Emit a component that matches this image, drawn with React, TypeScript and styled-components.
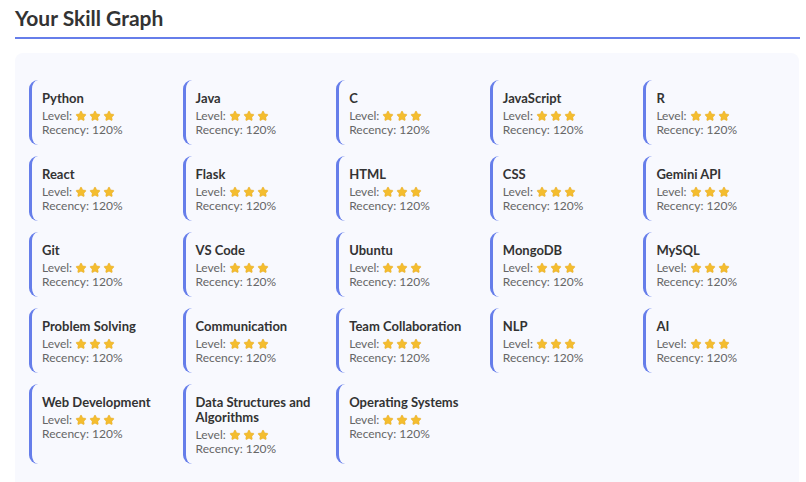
import styled, { createGlobalStyle } from "styled-components";

// skills shown in the graph, all at level 3 for now
const skills = [
  "Python", "Java", "C", "JavaScript", "R",
  "React", "Flask", "HTML", "CSS", "Gemini API",
  "Git", "VS Code", "Ubuntu", "MongoDB", "MySQL",
  "Problem Solving", "Communication", "Team Collaboration", "NLP", "AI",
  "Web Development", "Data Structures and Algorithms", "Operating Systems",
];

function Star() {
  return (
    <StarIcon viewBox="0 0 24 24">
      <path
        d="M12 2.2c.5 0 .9.3 1.1.7l2.4 4.9 5.4.8c.9.1 1.3 1.3.6 1.9l-3.9 3.8.9 5.4c.2.9-.8 1.6-1.6 1.2L12 18.3l-4.9 2.6c-.8.4-1.8-.3-1.6-1.2l.9-5.4-3.9-3.8c-.7-.6-.3-1.8.6-1.9l5.4-.8 2.4-4.9c.2-.4.6-.7 1.1-.7z"
        fill="#f4bd2f"
        stroke="#e0a21c"
        strokeWidth="0.8"
      />
    </StarIcon>
  );
}

function SkillCard({ name, level, recency }: { name: string; level: number; recency: number }) {
  return (
    <Card>
      <SkillName>{name}</SkillName>
      <Meta>
        Level:
        <Stars>
          {Array.from({ length: level }).map((_, i) => (
            <Star key={i} />
          ))}
        </Stars>
      </Meta>
      <Meta>Recency: {recency}%</Meta>
    </Card>
  );
}

export default function App() {
  return (
    <>
      <GlobalStyle />
      <Page>
        <Title>Your Skill Graph</Title>
        <Panel>
          {skills.map((s) => (
            <SkillCard key={s} name={s} level={3} recency={120} />
          ))}
        </Panel>
      </Page>
    </>
  );
}

const GlobalStyle = createGlobalStyle`
  body {
    margin: 0;
    background: #ffffff;
    font-family: Lato, "Noto Sans", sans-serif;
    color: #333;
  }
`;

const Page = styled.div`
  padding: 4px 6px 0 15px;
`;

const Title = styled.h2`
  margin: 0;
  font-size: 21px;
  font-weight: 700;
  color: #333;
  line-height: 28px;
  padding-bottom: 5px;
  border-bottom: 2px solid #667eea;
`;

const Panel = styled.div`
  margin-top: 14px;
  margin-right: 1px;
  background: #f8f9fe;
  border-radius: 8px;
  padding: 27px 14px 30px;
  display: grid;
  grid-template-columns: repeat(5, 1fr);
  column-gap: 12px;
  row-gap: 11px;
`;

const Card = styled.div`
  border-left: 3px solid #667eea;
  border-radius: 9px;
  padding: 11px 10px 8px;
`;

const SkillName = styled.div`
  font-size: 13px;
  font-weight: 700;
  color: #333;
  line-height: 15px;
  margin-bottom: 3px;
`;

const Meta = styled.div`
  display: flex;
  align-items: center;
  font-size: 12px;
  color: #666;
  line-height: 14px;
`;

const Stars = styled.span`
  display: inline-flex;
  gap: 2px;
  margin-left: 3px;
`;

const StarIcon = styled.svg`
  width: 12px;
  height: 12px;
`;
